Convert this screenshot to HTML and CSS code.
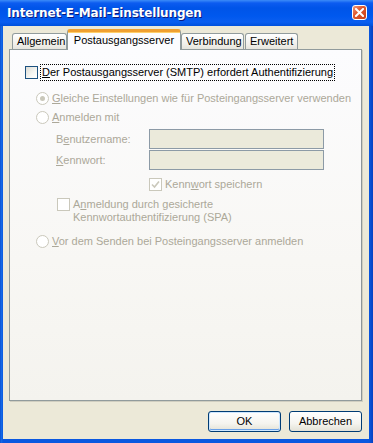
FILE: index.html
```html
<!DOCTYPE html>
<html lang="de">
<head>
<meta charset="utf-8">
<title>Internet-E-Mail-Einstellungen</title>
<link rel="stylesheet" href="styles.css">
</head>
<body>
<div class="window">
  <div class="titlebar">
    <span class="title">Internet-E-Mail-Einstellungen</span>
    <span class="close"><svg width="9" height="9" viewBox="0 0 9 9"><path d="M1 1L8 8M8 1L1 8" stroke="#fff" stroke-width="2" stroke-linecap="square"/></svg></span>
  </div>
  <div class="client">
    <div class="tabs">
      <div class="tab t1">Allgemein</div>
      <div class="tab t2 active">Postausgangsserver</div>
      <div class="tab t3">Verbindung</div>
      <div class="tab t4">Erweitert</div>
    </div>
    <div class="panel">
      <div class="row first">
        <span class="cb"></span>
        <span class="focus"><u>D</u>er Postausgangsserver (SMTP) erfordert Authentifizierung</span>
      </div>
      <div class="row indent1 r-gleiche">
        <span class="rb checked"></span>
        <span class="dis"><u>G</u>leiche Einstellungen wie für Posteingangsserver verwenden</span>
      </div>
      <div class="row indent1 r-anm">
        <span class="rb"></span>
        <span class="dis"><u>A</u>nmelden mit</span>
      </div>
      <div class="form">
        <span class="dis lbl">B<u>e</u>nutzername:</span>
        <span class="input"></span>
        <span class="dis lbl"><u>K</u>ennwort:</span>
        <span class="input"></span>
      </div>
      <div class="row save">
        <span class="cb dcb checked"><svg width="9" height="9" viewBox="0 0 9 9"><path d="M1 4.5L3.5 7L8 1.5" fill="none" stroke="#cac8bb" stroke-width="1.6"/></svg></span>
        <span class="dis">Kenn<u>w</u>ort speichern</span>
      </div>
      <div class="row spa">
        <span class="cb dcb"></span>
        <span class="dis">A<u>n</u>meldung durch gesicherte<br>Kennwortauthentifizierung (SPA)</span>
      </div>
      <div class="row indent1 r-vor">
        <span class="rb"></span>
        <span class="dis"><u>V</u>or dem Senden bei Posteingangsserver anmelden</span>
      </div>
    </div>
    <div class="buttons">
      <span class="btn default">OK</span>
      <span class="btn">Abbrechen</span>
    </div>
  </div>
</div>
</body>
</html>
```
FILE: styles.css
```css
html, body {
  margin: 0;
  padding: 0;
}
body {
  width: 373px;
  height: 443px;
  overflow: hidden;
  font-family: "Liberation Sans", Arial, sans-serif;
  font-size: 11px;
  color: #000;
}
.window {
  width: 373px;
  height: 443px;
  box-sizing: border-box;
  display: flex;
  flex-direction: column;
  background: linear-gradient(90deg, #0842c8 0, #166ee8 1px, #0a58e0 3px, #0a58e0 369px, #0540c0 373px);
  padding: 0 4px 4px 3px;
}
.titlebar {
  height: 26px;
  flex: none;
  margin: 0 -4px 0 -3px;
  padding: 0 6px 0 7px;
  display: flex;
  align-items: center;
  justify-content: space-between;
  background: linear-gradient(#3c8cf8 0, #0c5cf0 3px, #0054e8 8px, #0058ee 16px, #0a5ef0 22px, #0050dc 26px);
}
.title {
  color: #fff;
  font-family: "DejaVu Sans", sans-serif;
  font-weight: bold;
  font-size: 12px;
  letter-spacing: -0.15px;
  text-shadow: 1px 1px 0 #0a1a80;
  padding-bottom: 1px;
}
.close {
  width: 13px;
  height: 13px;
  border: 1px solid #fff;
  border-radius: 3px;
  background: linear-gradient(135deg, #f09a80 0, #e05a30 40%, #c84018 100%);
  display: flex;
  align-items: center;
  justify-content: center;
  margin-top: -1px;
}
.client {
  flex: 1;
  min-height: 0;
  background: #ece9d8;
  display: flex;
  flex-direction: column;
  padding: 3px 7px 7px 6px;
}
.tabs {
  flex: none;
  display: flex;
  align-items: flex-end;
  height: 20px;
  padding-left: 3px;
  position: relative;
  z-index: 1;
}
.tab {
  height: 15px;
  box-sizing: content-box;
  border: 1px solid #919b9c;
  border-bottom: none;
  border-radius: 3px 3px 0 0;
  background: linear-gradient(#ffffff, #f0efea 70%, #e6e4dc);
  padding: 0 4px;
  line-height: 15px;
  margin-right: 1px;
  text-align: center;
}
.t1 { width: 45px; }
.t2 { width: 102px; }
.t3 { width: 53px; }
.t4 { width: 43px; }
.tab.active {
  height: 18px;
  line-height: 17px;
  border-top: 3px solid #f7b34a;
  box-shadow: inset 0 1px 0 #ffcf6a;
  background: #fcfcfe;
  margin: 0 0 -1px -1px;
  padding: 0 5px;
  border-color: #f0a030 #919b9c #919b9c;
}
.panel {
  flex: none;
  box-sizing: border-box;
  height: 352px;
  border: 1px solid #919b9c;
  border-right-color: #8c9598;
  background: linear-gradient(#fcfcfe, #f8f7f4 60%, #f4f3ee);
  display: flex;
  flex-direction: column;
  padding: 15px 0 0 15px;
  box-shadow: 1px 1px 0 #d0cec0;
}
.row {
  display: flex;
  align-items: center;
  gap: 3px;
}
.row.first {
  height: 16px;
  margin-top: -1px;
}
.focus {
  outline: 1px dotted #000;
  outline-offset: 0;
  padding: 1px;
  line-height: 13px;
}
.cb {
  width: 11px;
  height: 11px;
  flex: none;
  border: 1px solid #1c5180;
  background: linear-gradient(135deg, #dcdcd5, #f6f6f3 60%, #ffffff);
  display: flex;
  align-items: center;
  justify-content: center;
}
.dcb {
  border-color: #cac8bb;
  background: #fff;
}
.rb {
  width: 11px;
  height: 11px;
  flex: none;
  border: 1px solid #cac8bb;
  border-radius: 50%;
  background: #fff;
  display: flex;
  align-items: center;
  justify-content: center;
}
.rb.checked::after {
  content: "";
  width: 5px;
  height: 5px;
  border-radius: 50%;
  background: #cac8bb;
}
.dis {
  color: #aca899;
  line-height: 13px;
}
.indent1 {
  margin-left: 11px;
}
.r-gleiche {
  margin-top: 12px;
}
.r-anm {
  margin-top: 6px;
}
.form {
  display: grid;
  grid-template-columns: 93px 175px;
  row-gap: 1px;
  margin: 5px 0 0 31px;
  align-items: center;
}
.input {
  height: 18px;
  border: 1px solid #8c9aa6;
  background: #ebeadb;
}
.save {
  margin: 8px 0 0 124px;
}
.spa {
  margin: 7px 0 0 32px;
  align-items: flex-start;
}
.r-vor {
  margin-top: 11px;
}
.buttons {
  flex: none;
  display: flex;
  justify-content: flex-end;
  gap: 8px;
  margin-top: 10px;
}
.btn {
  width: 71px;
  height: 19px;
  border: 1px solid #003c74;
  border-radius: 3px;
  background: linear-gradient(#ffffff, #f5f4ef 60%, #e3e1d6);
  display: flex;
  align-items: center;
  justify-content: center;
  line-height: 13px;
}
.btn.default {
  box-shadow: inset 0 0 0 1px #cee7ff, inset 0 -1px 0 1px #69a0e8;
}
u {
  text-decoration: underline;
  text-underline-offset: 1px;
}
```
